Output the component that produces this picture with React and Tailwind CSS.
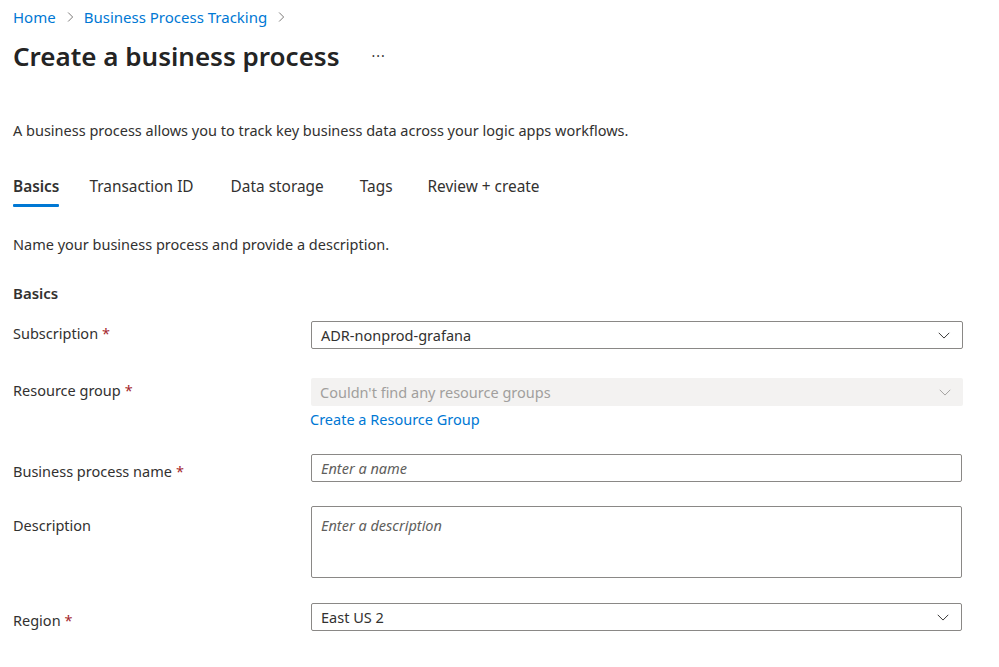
import React from 'react'

const Chevron = ({ className }) => (
    <svg width="14" height="14" viewBox="0 0 16 16" className={className}>
        <path d="M2 5.5 L8 11.5 L14 5.5" fill="none" stroke="currentColor" strokeWidth="1.1" />
    </svg>
)

const Required = () => <span className="text-[#a4262c] ml-1">*</span>

const Select = ({ value, disabled }) => (
    <div
        className={
            disabled
                ? 'h-[28px] rounded-[2px] bg-[#f3f2f1] text-[#a19f9d] flex items-center justify-between pl-[9px] pr-[11px]'
                : 'h-[28px] rounded-[2px] border border-[#8a8886] text-[#323130] flex items-center justify-between pl-[9px] pr-[11px]'
        }
    >
        <span>{value}</span>
        <Chevron className={disabled ? 'text-[#a19f9d]' : 'text-[#323130]'} />
    </div>
)

export default function App() {
    return (
        <div className="min-h-screen bg-white text-[#323130] text-[14.5px] leading-[20px] px-[13px] pt-[7px]" style={{ fontFamily: '"Noto Sans", "Open Sans", sans-serif' }}>
            <div className="flex items-center text-[15px] text-[#0078d4] gap-[8px]">
                <span>Home</span>
                <Chevron className="text-[#605e5c] -rotate-90 w-[12px] h-[12px]" />
                <span>Business Process Tracking</span>
                <Chevron className="text-[#605e5c] -rotate-90 w-[12px] h-[12px]" />
            </div>

            <div className="flex items-center mt-[9px] h-[40px]">
                <h1 className="text-[26px] font-semibold leading-[36px] text-[#242424]">Create a business process</h1>
                <span className="ml-[32px] text-[14px] tracking-[1px] text-[#323130]">···</span>
            </div>

            <p className="mt-[44px]">A business process allows you to track key business data across your logic apps workflows.</p>

            <div className="flex mt-[37px] text-[15.4px]">
                <div className="flex flex-col">
                    <span className="font-semibold">Basics</span>
                    <div className="h-[3px] bg-[#0078d4] mt-[7px] rounded-[1px]" />
                </div>
                <span className="ml-[30px]">Transaction ID</span>
                <span className="ml-[37px]">Data storage</span>
                <span className="ml-[36px]">Tags</span>
                <span className="ml-[35px]">Review + create</span>
            </div>

            <p className="mt-[27px]">Name your business process and provide a description.</p>

            <h2 className="mt-[29px] font-semibold text-[15px]">Basics</h2>

            <div className="flex mt-[18px]">
                <div className="w-[298px] pt-[2px]">Subscription<Required /></div>
                <div className="w-[652px]">
                    <Select value="ADR-nonprod-grafana" />
                </div>
            </div>

            <div className="flex mt-[29px]">
                <div className="w-[298px] pt-[2px]">Resource group<Required /></div>
                <div className="w-[652px]">
                    <Select value="Couldn't find any resource groups" disabled />
                    <div className="text-[#0078d4] mt-[3px] -ml-[1px] text-[14.5px]">Create a Resource Group</div>
                </div>
            </div>

            <div className="flex mt-[25px]">
                <div className="w-[298px] pt-[7px]">Business process name<Required /></div>
                <div className="w-[651px] h-[28px] rounded-[2px] border border-[#8a8886] flex items-center pl-[9px] italic text-[#605e5c]">
                    Enter a name
                </div>
            </div>

            <div className="flex mt-[24px]">
                <div className="w-[298px] pt-[9px]">Description</div>
                <div className="w-[651px] h-[72px] rounded-[2px] border border-[#8a8886] pl-[9px] pt-[8px] italic text-[#605e5c]">
                    Enter a description
                </div>
            </div>

            <div className="flex mt-[25px]">
                <div className="w-[298px] pt-[7px]">Region<Required /></div>
                <div className="w-[651px]">
                    <Select value="East US 2" />
                </div>
            </div>
        </div>
    )
}
